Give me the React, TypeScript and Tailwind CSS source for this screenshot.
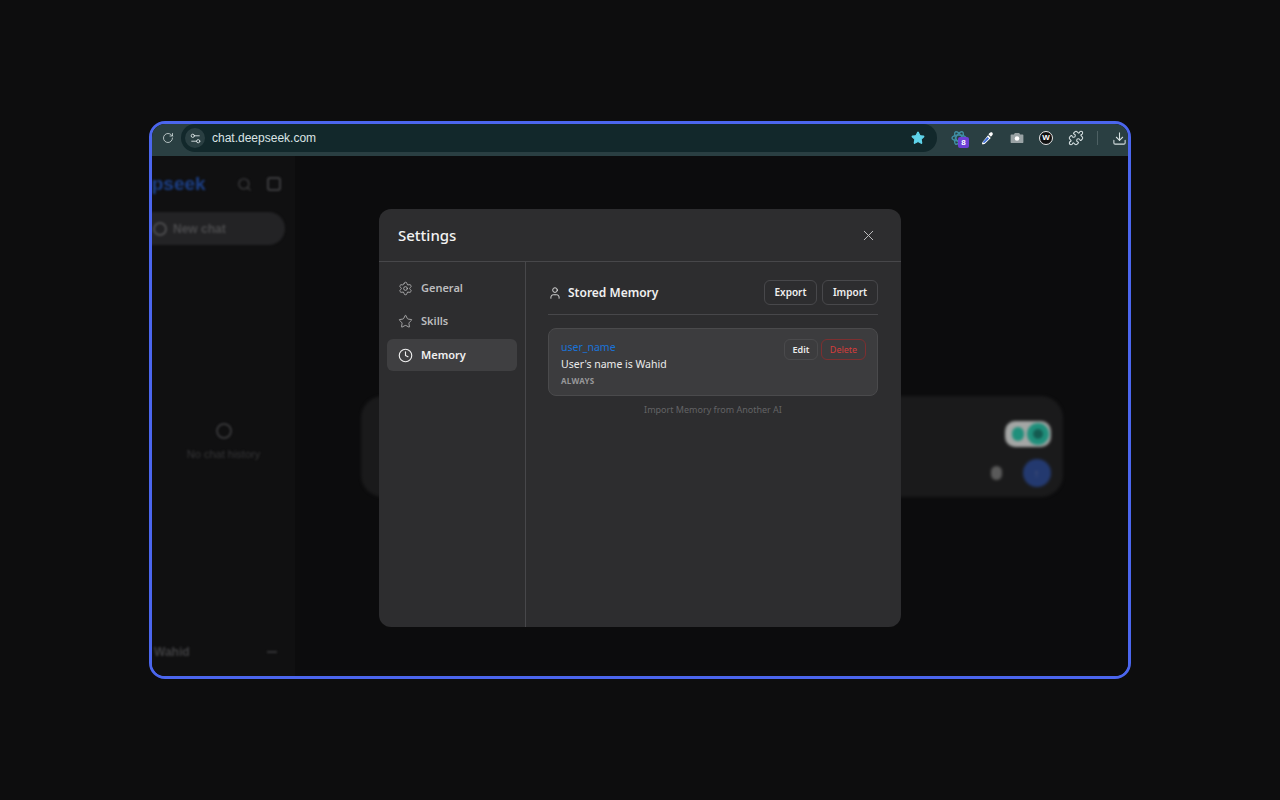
import { Clock, Download, Puzzle, RotateCw, Search, Settings, Settings2, Star, User, X } from 'lucide-react';

const navItems = [
  { label: 'General', icon: Settings },
  { label: 'Skills', icon: Star },
  { label: 'Memory', icon: Clock, active: true },
];

const Toolbar = () => (
  <div className="flex h-[32px] shrink-0 items-start bg-[#2a3f42] font-['Liberation_Sans',sans-serif]">
    <div className="flex h-[28px] w-[29px] shrink-0 items-center justify-center pl-[2px]">
      <RotateCw size={12} strokeWidth={1.6} className="text-[#d5dfe0]" />
    </div>
    <div className="flex h-[28px] w-[756px] shrink-0 items-center rounded-full bg-[#12282b] pl-[4px] pr-[12px]">
      <div className="flex h-[20px] w-[20px] items-center justify-center rounded-full bg-[#2a3f42]">
        <Settings2 size={13} strokeWidth={1.6} className="text-[#dfe7e8]" />
      </div>
      <span className="ml-[7px] text-[12px] text-[#dbe4e5]">chat.deepseek.com</span>
      <Star size={14} className="ml-auto fill-[#5fd4ea] text-[#5fd4ea]" />
    </div>
    <div className="flex h-[28px] flex-1 items-center pl-[14px]">
      <div className="relative h-[16px] w-[16px]">
        <svg viewBox="0 0 16 16" className="h-[16px] w-[16px] text-[#3f8ea3]" fill="none" stroke="currentColor" strokeWidth="1.4">
          <ellipse cx="8" cy="8" rx="7" ry="3" />
          <ellipse cx="8" cy="8" rx="7" ry="3" transform="rotate(60 8 8)" />
          <ellipse cx="8" cy="8" rx="7" ry="3" transform="rotate(120 8 8)" />
        </svg>
        <span className="absolute left-[7px] top-[7px] flex h-[11px] w-[11px] items-center justify-center rounded-[2px] bg-[#6d3fd6] text-[8px] font-bold text-white">8</span>
      </div>
      <svg viewBox="0 0 16 16" className="ml-[13px] h-[15px] w-[15px]">
        <path d="M10 2.5c1-1.2 2.4-1.4 3.2-.6s.6 2.2-.6 3.2l-1 1-2.6-2.6z" fill="#fff" />
        <path d="M8.6 4.5l2.9 2.9-6 6c-.7.7-1.6.7-2.6 1.1l-.8-.8c.4-1 .4-1.9 1.1-2.6z" fill="#fff" />
        <path d="M8 6.4l1.6 1.6-4.6 4.6-1.7.3.3-1.7z" fill="#3f6fd8" />
      </svg>
      <svg viewBox="0 0 16 16" className="ml-[15px] h-[14px] w-[14px]">
        <path d="M1.5 4h3l1-1.6h5l1 1.6h3a.8.8 0 0 1 .8.8v8a.8.8 0 0 1-.8.8h-13a.8.8 0 0 1-.8-.8v-8A.8.8 0 0 1 1.5 4z" fill="#9aa3a5" />
        <circle cx="8" cy="8.6" r="2.6" fill="#fff" />
      </svg>
      <div className="ml-[15px] flex h-[14px] w-[14px] items-center justify-center rounded-full border border-[#e8e8e8] bg-[#111] text-[8px] font-bold leading-none text-white">W</div>
      <Puzzle size={16} strokeWidth={1.6} className="ml-[15px] text-[#d5dfe0]" />
      <div className="ml-[13px] h-[14px] w-px bg-[#4d6063]" />
      <Download size={15} strokeWidth={1.7} className="ml-[14px] text-[#d5dfe0]" />
    </div>
  </div>
);

const BlurredSidebar = () => (
  <aside className="flex w-[143px] shrink-0 flex-col overflow-hidden bg-[#101011] font-['Liberation_Sans',sans-serif]">
    <div className="flex h-[56px] items-center blur-[1px]">
      <span className="ml-[-33px] text-[19px] font-bold text-[#1c3f86]">deepseek</span>
      <Search size={15} strokeWidth={2.2} className="ml-[31px] text-[#3c3c3e]" />
      <div className="ml-[15px] h-[14px] w-[14px] rounded-[3px] border-2 border-[#3c3c3e]" />
    </div>
    <div className="ml-[-20px] flex h-[33px] w-[153px] items-center rounded-full bg-[#232325] pl-[21px] blur-[1px]">
      <div className="h-[14px] w-[14px] rounded-full border-2 border-[#4b4b4d]" />
      <span className="ml-[6px] text-[12px] font-bold text-[#4b4b4d]">New chat</span>
    </div>
    <div className="mt-[178px] flex flex-col items-center blur-[1px]">
      <div className="h-[16px] w-[16px] rounded-full border-2 border-[#363638]" />
      <span className="mt-[7px] text-[11px] text-[#363638]">No chat history</span>
    </div>
    <div className="mt-auto mb-[15px] flex items-center justify-between pl-[2px] pr-[18px] blur-[1px]">
      <span className="text-[12px] font-bold text-[#414143]">Wahid</span>
      <span className="h-[2px] w-[10px] bg-[#333335]" />
    </div>
  </aside>
);

const BlurredMain = () => (
  <main className="flex flex-1 items-center justify-center bg-[#0c0c0d]">
    <div className="mt-[61px] flex h-[101px] w-[702px] flex-col items-end rounded-[22px] bg-[#1a1a1b] pr-[12px] pt-[25px] blur-[1.5px]">
      <div className="flex h-[26px] w-[46px] items-center justify-end gap-[3px] rounded-[10px] bg-[#a4a6a5] pr-[2px]">
        <span className="h-[14px] w-[12px] rounded-full bg-[#1f8f7b]" />
        <span className="h-[22px] w-[22px] rounded-full border-[6px] border-[#1f8f7b] bg-[#145a50]" />
      </div>
      <div className="mt-[12px] flex items-center gap-[21px]">
        <span className="h-[14px] w-[11px] rounded-full bg-[#5a5a5a]" />
        <span className="flex h-[28px] w-[28px] items-center justify-center rounded-full bg-[#23396f] text-[11px] text-[#52597a]">↑</span>
      </div>
    </div>
  </main>
);

const SettingsModal = () => (
  <div className="mt-[4px] flex h-[418px] w-[522px] flex-col rounded-[12px] bg-[#2d2d2f] font-['Noto_Sans',sans-serif]">
    <header className="flex h-[53px] shrink-0 items-center justify-between border-b border-[#47474a] pl-[19px] pr-[24px]">
      <h2 className="text-[15px] font-medium text-[#f2f2f2]">Settings</h2>
      <X size={17} strokeWidth={1.4} className="text-[#bdbdbf]" />
    </header>
    <div className="flex min-h-0 flex-1">
      <nav className="w-[147px] shrink-0 border-r border-[#47474a] pl-[8px] pr-[8px] pt-[10px]">
        {navItems.map(({ label, icon: Icon, active }) => (
          <div
            key={label}
            className={`mb-[1.5px] flex h-[32px] w-[130px] items-center rounded-[6px] pl-[11px] ${active ? 'bg-[#3f3f41] text-[#f0f0f0]' : 'text-[#bcbcbe]'}`}
          >
            <Icon size={15} strokeWidth={active ? 1.8 : 1.3} />
            <span className="ml-[8px] text-[11px] font-semibold">{label}</span>
          </div>
        ))}
      </nav>
      <section className="flex-1 pl-[22px] pr-[23px] pt-[18px]">
        <div className="flex h-[35px] items-start justify-between border-b border-[#47474a]">
          <div className="flex h-[25px] items-center">
            <User size={14} strokeWidth={1.5} className="text-[#eaeaea]" />
            <span className="ml-[6px] text-[12px] font-semibold text-[#f0f0f0]">Stored Memory</span>
          </div>
          <div className="flex gap-[5px]">
            <button className="flex h-[25px] w-[53px] items-center justify-center rounded-[6px] border border-[#48484b] text-[10px] font-semibold text-[#f0f0f0]">Export</button>
            <button className="flex h-[25px] w-[56px] items-center justify-center rounded-[6px] border border-[#48484b] text-[10px] font-semibold text-[#f0f0f0]">Import</button>
          </div>
        </div>
        <div className="mt-[13px] flex h-[68px] items-start justify-between rounded-[8px] border border-[#4a4a4c] bg-[#3c3c3e] pl-[12px] pr-[11px] pt-[10px]">
          <div className="flex flex-col">
            <span className="h-[16px] text-[10.5px] leading-[16px] text-[#1a73d8]">user_name</span>
            <span className="mt-[1px] h-[17px] text-[10.5px] leading-[17px] text-[#ececec]">User's name is Wahid</span>
            <span className="mt-[1px] text-[8px] font-bold leading-[14px] tracking-[0.3px] text-[#98989a]">ALWAYS</span>
          </div>
          <div className="flex gap-[3px]">
            <button className="flex h-[21px] w-[34px] items-center justify-center rounded-[6px] border border-[#4a4a4c] text-[9px] font-semibold text-[#eaeaea]">Edit</button>
            <button className="flex h-[21px] w-[45px] items-center justify-center rounded-[6px] border border-[#7d2f30] text-[9px] text-[#d43c3c]">Delete</button>
          </div>
        </div>
        <p className="mt-[7px] text-center text-[9px] text-[#636365]">Import Memory from Another AI</p>
      </section>
    </div>
  </div>
);

export default function App() {
  return (
    <div className="flex h-[800px] w-[1280px] items-center justify-center bg-[#0d0d0e]">
      <div className="flex h-[558px] w-[982px] flex-col overflow-hidden rounded-[16px] border-[3px] border-[#4b66ee]">
        <Toolbar />
        <div className="relative flex min-h-0 flex-1">
          <BlurredSidebar />
          <BlurredMain />
          <div className="absolute inset-0 flex items-center justify-center">
            <SettingsModal />
          </div>
        </div>
      </div>
    </div>
  );
}
